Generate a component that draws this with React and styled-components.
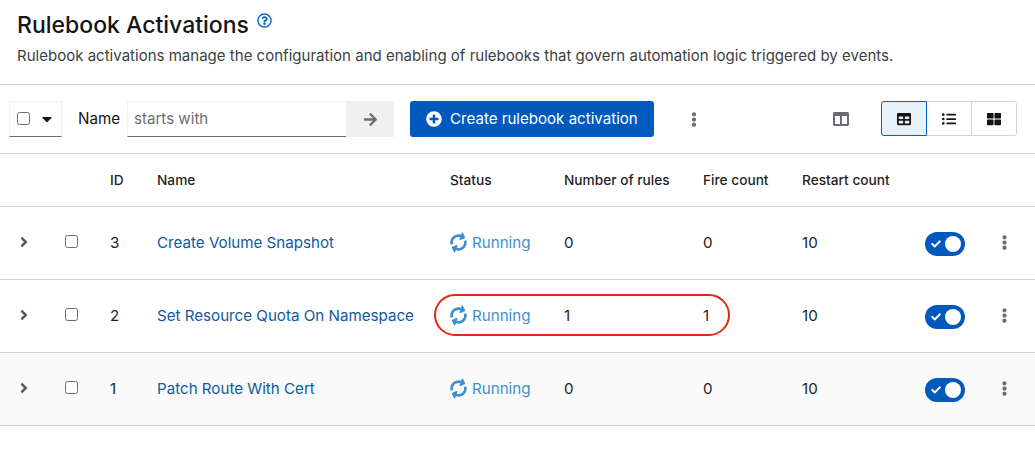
import React from "react";
import styled, { createGlobalStyle } from "styled-components";
import {
  FaAngleRight, FaArrowRight, FaCaretDown, FaCheck, FaColumns, FaEllipsisV,
  FaListUl, FaPlusCircle, FaRegQuestionCircle, FaSyncAlt, FaTable, FaThLarge,
} from "react-icons/fa";

const Global = createGlobalStyle`
  html, body { margin: 0; padding: 0; background: #fff; }
  body { font-family: "Inter", "Noto Sans", sans-serif; color: #151515; width: 1035px; height: 454px; overflow: hidden; }
  * { box-sizing: border-box; }
`;

const Header = styled.header`
  height: 85px;
  padding: 9px 17px 0;
  border-bottom: 1px solid #d2d2d2;
`;
const TitleRow = styled.div`
  display: flex;
  align-items: flex-start;
  gap: 8px;
  height: 32px;
`;
const Title = styled.h1`
  margin: 0;
  font-size: 23px;
  line-height: 32px;
  font-weight: 500;
  color: #151515;
`;
const Help = styled.span`
  display: flex;
  color: #0066cc;
  font-size: 15px;
  margin-top: 4px;
`;
const Desc = styled.p`
  margin: 5px 0 0;
  font-size: 15.04px;
  line-height: 20px;
  color: #3c3f42;
`;

const Toolbar = styled.div`
  height: 69px;
  padding: 16px 18px 0 9px;
  display: flex;
  align-items: flex-start;
  border-bottom: 1px solid #d2d2d2;
`;
const BulkSelect = styled.div`
  width: 53px;
  height: 36px;
  border: 1px solid #f0f0f0;
  border-bottom-color: #6a6e73;
  display: flex;
  align-items: center;
  padding: 0 0 1px 7px;
  gap: 9px;
  font-size: 16px;
`;
const Check = styled.span`
  width: 13px;
  height: 13px;
  border: 1px solid #6a6e73;
  border-radius: 2.5px;
  background: #fff;
  display: block;
`;
const FilterLabel = styled.span`
  font-size: 15.2px;
  line-height: 35px;
  margin-left: 16px;
  width: 49px;
`;
const FilterInput = styled.div`
  width: 219px;
  height: 36px;
  border: 1px solid #f0f0f0;
  border-bottom-color: #6a6e73;
  border-right: 0;
  padding-left: 6px;
  font-size: 15.1px;
  line-height: 33px;
  color: #6a6e73;
`;
const FilterGo = styled.div`
  width: 48px;
  height: 36px;
  background: #f0f0f0;
  color: #6a6e73;
  display: flex;
  align-items: center;
  justify-content: center;
  font-size: 15px;
`;
const Primary = styled.div`
  margin-left: 16px;
  width: 244px;
  height: 36px;
  border-radius: 3px;
  background: #0059bd;
  color: #fff;
  display: flex;
  align-items: center;
  gap: 8px;
  padding-left: 16px;
  font-size: 15.1px;
  line-height: 34px;
  white-space: nowrap;
  svg { font-size: 16px; }
`;
const ToolKebab = styled.div`
  margin-left: 34px;
  width: 12px;
  height: 36px;
  display: flex;
  align-items: center;
  justify-content: center;
  color: #6a6e73;
  font-size: 15px;
`;
const ColumnsBtn = styled.div`
  margin-left: 133px;
  width: 16px;
  height: 35px;
  display: flex;
  align-items: center;
  color: #6a6e73;
  font-size: 16px;
`;
const ViewGroup = styled.div`
  margin-left: 33px;
  display: flex;
  height: 35px;
`;
const ViewBtn = styled.div`
  width: 46px;
  height: 35px;
  margin-left: -1px;
  display: flex;
  align-items: center;
  justify-content: center;
  font-size: 14px;
  color: #151515;
  background: ${(p) => (p.$active ? "#e7f1fa" : "#fff")};
  border: 1px solid ${(p) => (p.$active ? "#06c" : "#d2d2d2")};
  z-index: ${(p) => (p.$active ? 1 : 0)};
  border-radius: ${(p) => p.$radius};
`;

const GRID = "48px 46px 63px 293px 114px 139px 99px 123px 60px 38px";

const HeadRow = styled.div`
  display: grid;
  grid-template-columns: ${GRID};
  height: 53px;
  align-items: center;
  border-bottom: 1px solid #d2d2d2;
  font-size: 13.7px;
  font-weight: 500;
`;
const Row = styled.div`
  position: relative;
  display: grid;
  grid-template-columns: ${GRID};
  height: 73px;
  align-items: center;
  border-bottom: 1px solid #d2d2d2;
  font-size: 15.15px;
  background: ${(p) => (p.$shade ? "#fafafa" : "#fff")};
`;
const Cell = styled.div`
  padding-left: ${(p) => (p.$first ? "16px" : "0")};
  padding-bottom: ${(p) => (p.$head ? "0" : "2px")};
  white-space: nowrap;
  color: #1f1f1f;
`;
const ToggleCell = styled.div`
  display: flex;
  padding-top: 2px;
`;
const IconCell = styled.div`
  display: flex;
  justify-content: center;
  padding-bottom: ${(p) => p.$lift || 2}px;
  color: ${(p) => p.$color || "#151515"};
  font-size: ${(p) => p.$size || 14}px;
`;
const NameLink = styled.a`
  color: #0f5a9e;
`;
const Status = styled.div`
  display: flex;
  align-items: center;
  gap: 5px;
  color: #3f8fd0;
  svg { font-size: 17px; transform: rotate(-25deg); }
`;
const Toggle = styled.span`
  width: 40px;
  height: 24px;
  border-radius: 12px;
  background: #0059bd;
  display: flex;
  align-items: center;
  justify-content: space-between;
  padding: 0 4px 0 6px;
  color: #fff;
  font-size: 10px;
`;
const Knob = styled.span`
  width: 16px;
  height: 16px;
  border-radius: 50%;
  background: #fff;
`;
const Highlight = styled.div`
  position: absolute;
  left: 434px;
  top: 14px;
  width: 296px;
  height: 42px;
  border: 2px solid #e3290e;
  border-radius: 21px;
  pointer-events: none;
`;

const rows = [
  { id: 3, name: "Create Volume Snapshot", rules: 0, fire: 0 },
  { id: 2, name: "Set Resource Quota On Namespace", rules: 1, fire: 1, mark: true },
  { id: 1, name: "Patch Route With Cert", rules: 0, fire: 0, shade: true },
];

export default function App() {
  return (
    <>
      <Global />
      <Header>
        <TitleRow>
          <Title>Rulebook Activations</Title>
          <Help><FaRegQuestionCircle /></Help>
        </TitleRow>
        <Desc>Rulebook activations manage the configuration and enabling of rulebooks that govern automation logic triggered by events.</Desc>
      </Header>
      <Toolbar>
        <BulkSelect><Check /><FaCaretDown /></BulkSelect>
        <FilterLabel>Name</FilterLabel>
        <FilterInput>starts with</FilterInput>
        <FilterGo><FaArrowRight /></FilterGo>
        <Primary><FaPlusCircle />Create rulebook activation</Primary>
        <ToolKebab><FaEllipsisV /></ToolKebab>
        <ColumnsBtn><FaColumns /></ColumnsBtn>
        <ViewGroup>
          <ViewBtn $active $radius="3px 0 0 3px"><FaTable /></ViewBtn>
          <ViewBtn $radius="0"><FaListUl /></ViewBtn>
          <ViewBtn $radius="0 3px 3px 0"><FaThLarge /></ViewBtn>
        </ViewGroup>
      </Toolbar>
      <HeadRow>
        <span />
        <span />
        <Cell $first $head>ID</Cell>
        <Cell $head>Name</Cell>
        <Cell $head>Status</Cell>
        <Cell $head>Number of rules</Cell>
        <Cell $head>Fire count</Cell>
        <Cell $head>Restart count</Cell>
      </HeadRow>
      {rows.map((r) => (
        <Row key={r.id} $shade={r.shade}>
          <IconCell $color="#55595e" $size={16}><FaAngleRight /></IconCell>
          <IconCell $lift={4}><Check /></IconCell>
          <Cell $first>{r.id}</Cell>
          <Cell><NameLink>{r.name}</NameLink></Cell>
          <Cell><Status><FaSyncAlt />Running</Status></Cell>
          <Cell>{r.rules}</Cell>
          <Cell>{r.fire}</Cell>
          <Cell>10</Cell>
          <ToggleCell><Toggle><FaCheck /><Knob /></Toggle></ToggleCell>
          <IconCell $color="#6a6e73" $size={15}><FaEllipsisV /></IconCell>
          {r.mark && <Highlight />}
        </Row>
      ))}
    </>
  );
}
